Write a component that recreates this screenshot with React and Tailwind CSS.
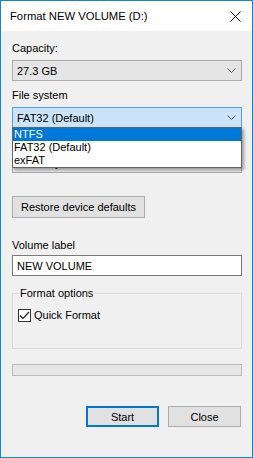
const font = { fontFamily: '"Segoe UI", "Liberation Sans", Arial, sans-serif' };

function Chevron() {
  return (
    <svg width="9" height="5" viewBox="0 0 9 5" className="shrink-0">
      <path d="M0.5 0.5 L4.5 4.5 L8.5 0.5" fill="none" stroke="#555" strokeWidth="1" />
    </svg>
  );
}

function Combo({ value, active }) {
  return (
    <div
      className={`h-[21px] flex items-center justify-between pl-[4px] pr-[5px] border ${
        active ? "bg-[#cce4f7] border-[#569de5]" : "bg-[#e5e5e5] border-[#acacac]"
      }`}
    >
      <span>{value}</span>
      <Chevron />
    </div>
  );
}

export default function App() {
  const options = ["NTFS", "FAT32 (Default)", "exFAT"];

  return (
    <div
      className="w-[253px] h-[458px] bg-[#f0f0f0] border border-[#1883d7] flex flex-col text-[11px] leading-[16px] text-black relative"
      style={font}
    >
      {/* title bar */}
      <div className="h-[30px] bg-white flex items-center justify-between pl-[9px] pr-[11px]">
        <span className="text-[11.25px]">Format NEW VOLUME (D:)</span>
        <svg width="11" height="11" viewBox="0 0 11 11">
          <path d="M0.5 0.5 L10.5 10.5 M10.5 0.5 L0.5 10.5" stroke="#111" strokeWidth="1" />
        </svg>
      </div>

      <div className="ml-[11px] w-[230px] flex flex-col">
        <div className="mt-[9px]">Capacity:</div>
        <div className="mt-[4px]">
          <Combo value="27.3 GB" />
        </div>

        <div className="mt-[6px]">File system</div>
        <div className="mt-[4px] relative">
          <Combo value="FAT32 (Default)" active />
          {/* open dropdown list, covers the allocation unit row */}
          <div className="absolute left-0 top-[20px] w-[230px] bg-white border border-[#646464] shadow-[2px_2px_3px_rgba(0,0,0,0.35)] z-10">
            {options.map((o, i) => (
              <div
                key={o}
                className={`h-[13px] leading-[13px] pl-[1px] ${i === 0 ? "bg-[#0078d7] text-white" : ""}`}
              >
                {o}
              </div>
            ))}
          </div>
        </div>

        {/* label hidden behind the list */}
        <div className="mt-[4px] h-[16px]" />
        <div className="mt-[4px]">
          <Combo value="16 kilobytes" />
        </div>

        <div className="mt-[23px]">
          <button className="h-[22px] px-[8px] bg-[#e1e1e1] border border-[#adadad]">
            Restore device defaults
          </button>
        </div>

        <div className="mt-[19px]">Volume label</div>
        <div className="mt-[2px] h-[21px] bg-white border border-[#7a7a7a] flex items-center pl-[4px]">
          NEW VOLUME
        </div>

        <div className="mt-[17px] h-[56px] border border-[#dcdcdc] relative pt-[13px] pl-[5px]">
          <span className="absolute -top-[9px] left-[6px] bg-[#f0f0f0] px-[1px]">Format options</span>
          <label className="flex items-center gap-[3px]">
            <span className="w-[13px] h-[13px] bg-white border border-[#333] flex items-center justify-center">
              <svg width="11" height="9" viewBox="0 0 11 9">
                <path d="M1 4.5 L4 7.5 L10 1" fill="none" stroke="#222" strokeWidth="1.2" />
              </svg>
            </span>
            <span>Quick Format</span>
          </label>
        </div>

        <div className="mt-[15px] h-[12px] bg-[#e6e6e6] border border-[#bcbcbc]" />

        <div className="mt-[30px] flex justify-end gap-[9px] pr-[1px]">
          <button className="w-[73px] h-[21px] bg-[#e1e1e1] border-2 border-[#0078d7]">Start</button>
          <button className="w-[73px] h-[21px] bg-[#e1e1e1] border border-[#adadad]">Close</button>
        </div>
      </div>
    </div>
  );
}
